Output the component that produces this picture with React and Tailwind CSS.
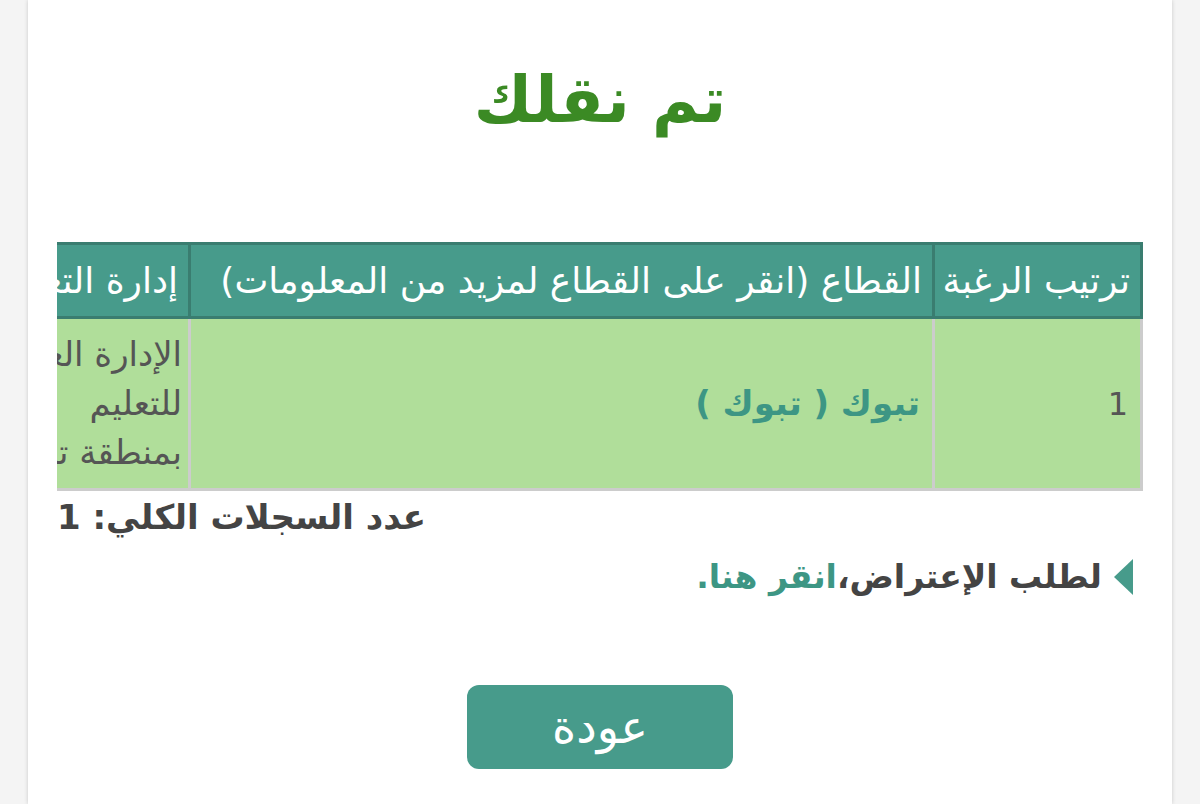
export default function App() {
  const font = { fontFamily: '"DejaVu Sans", "Noto Sans", sans-serif' };
  return (
    <div dir="rtl" className="min-h-[804px] w-[1200px] bg-[#f4f4f4] flex justify-center" style={font}>
      <div className="w-[1144px] min-h-[804px] bg-white shadow-[0_0_4px_rgba(0,0,0,0.18)] px-[29px]">
        <h1 className="text-center text-[#3b8a24] text-[64px] font-bold pt-[50px] leading-[100px]">تم نقلك</h1>

        <div className="mt-[92px] overflow-hidden">
          <table className="w-[1500px] table-fixed border-collapse">
            <colgroup>
              <col className="w-[208px]" />
              <col className="w-[744px]" />
              <col className="w-[300px]" />
              <col className="w-[248px]" />
            </colgroup>
            <thead>
              <tr className="bg-[#479b8b] text-white h-[74px]">
                <th className="border-[3px] border-[#3a7d70] text-right font-normal text-[36px] px-[10px] whitespace-nowrap">ترتيب الرغبة</th>
                <th className="border-[3px] border-[#3a7d70] text-right font-normal text-[36px] px-[10px] whitespace-nowrap">القطاع (انقر على القطاع لمزيد من المعلومات)</th>
                <th className="border-[3px] border-[#3a7d70] text-right font-normal text-[36px] px-[10px] whitespace-nowrap">إدارة التعليم</th>
                <th className="border-[3px] border-[#3a7d70] text-right font-normal text-[36px] px-[10px] whitespace-nowrap">الحالة</th>
              </tr>
            </thead>
            <tbody>
              <tr className="bg-[#b0de9a] h-[172px] text-[#555]">
                <td className="border-[3px] border-[#cccccc] text-right text-[32px] px-[12px]">1</td>
                <td className="border-[3px] border-[#cccccc] text-right text-[34px] px-[12px] font-bold">
                  <a className="text-[#3d9684]">تبوك ( تبوك )</a>
                </td>
                <td className="border-[3px] border-[#cccccc] text-right text-[34px] leading-[49px] px-[6px] whitespace-nowrap">
                  الإدارة العامة<br />للتعليم<br />بمنطقة تبوك
                </td>
                <td className="border-[3px] border-[#cccccc] text-right text-[34px] px-[12px]">تم النقل</td>
              </tr>
            </tbody>
          </table>
        </div>

        <div className="flex justify-end mt-[6px]">
          <p className="text-[34px] font-bold text-[#444] leading-[40px]">عدد السجلات الكلي: 1</p>
        </div>

        <div className="flex items-center gap-[12px] mt-[20px] pr-[10px]">
          <svg width="19" height="36" viewBox="0 0 19 36" className="shrink-0">
            <polygon points="19,0 19,36 0,18" fill="#479b8b" />
          </svg>
          <p className="text-[33px] font-bold text-[#444] leading-[40px]">
            لطلب الإعتراض،<a className="text-[#3d9684]">انقر هنا.</a>
          </p>
        </div>

        <div className="flex justify-center mt-[88px] pb-[35px]">
          <button className="w-[266px] h-[84px] rounded-[12px] bg-[#479b8b] text-white text-[46px] leading-none">عودة</button>
        </div>
      </div>
    </div>
  );
}
